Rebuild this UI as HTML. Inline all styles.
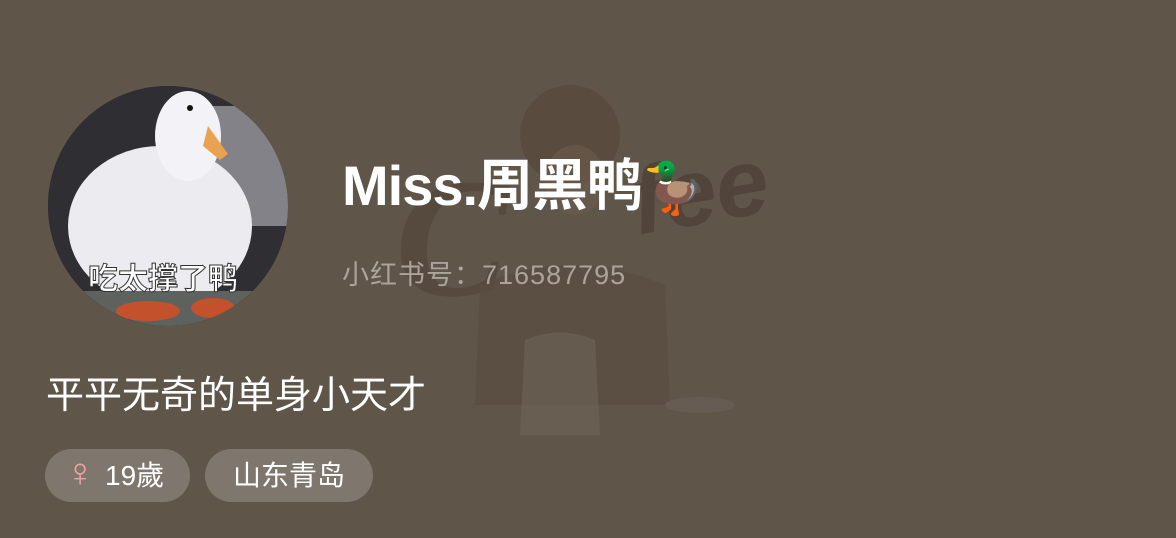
<!DOCTYPE html>
<html><head><meta charset="utf-8"><style>
html,body{margin:0;padding:0}
body{width:1176px;height:538px;background:#5f5549;position:relative;overflow:hidden;font-family:"Liberation Sans","Noto Sans CJK SC",sans-serif;color:#fff}
.wm{position:absolute;left:390px;top:85px;width:400px;height:370px}
.av{position:absolute;left:48px;top:86px;width:240px;height:240px;border-radius:50%;overflow:hidden;background:#2e2d30}
.name{position:absolute;left:342px;top:146px;font-size:56px;font-weight:bold;letter-spacing:-1px;line-height:80px}
.id{position:absolute;left:342px;top:255px;font-size:27px;letter-spacing:1px;color:#aca49a;line-height:40px}
.bio{position:absolute;left:46px;top:370px;font-size:38px;line-height:52px}
.tag{position:absolute;top:449px;height:53px;border-radius:27px;background:#7f766d;font-size:28px;line-height:53px;color:#fff}
</style></head><body>
<svg class="wm" viewBox="0 0 400 370">
<text x="5" y="210" font-family="Liberation Serif,serif" font-style="italic" font-weight="bold" font-size="170" fill="#54483d" opacity=".8">C</text>
<text x="240" y="140" font-family="Liberation Sans,sans-serif" font-style="italic" font-weight="bold" font-size="95" fill="#4e4037" opacity=".8" transform="rotate(-10 300 100)">fee</text>
<ellipse cx="180" cy="50" rx="50" ry="50" fill="#57483c" opacity=".7"/>
<ellipse cx="185" cy="95" rx="30" ry="35" fill="#6f5e50" opacity=".5"/>
<path d="M90 200 Q180 160 275 200 L280 320 L85 320 Z" fill="#5a4d41" opacity=".7"/>
<path d="M135 255 Q170 240 205 255 L210 350 L130 350 Z" fill="#6e6459" opacity=".6"/>
<ellipse cx="310" cy="320" rx="35" ry="8" fill="#665c51"/>
</svg>
<div class="av">
<svg width="240" height="240" viewBox="0 0 240 240">
<rect width="240" height="240" fill="#2f2e33"/>
<rect x="160" y="20" width="80" height="120" fill="#bdbbc1" opacity=".6"/>
<ellipse cx="112" cy="140" rx="92" ry="80" fill="#ecebf0"/>
<ellipse cx="140" cy="50" rx="33" ry="45" fill="#f3f2f6"/>
<path d="M160 40 L180 68 L172 74 L155 60 Z" fill="#e8a250"/>
<circle cx="142" cy="22" r="3" fill="#111"/>
<rect x="30" y="205" width="180" height="35" fill="#5d625f"/>
<ellipse cx="100" cy="225" rx="32" ry="10" fill="#c3512b"/>
<ellipse cx="165" cy="222" rx="22" ry="10" fill="#c3512b"/>
<text x="115" y="203" text-anchor="middle" font-family="Liberation Sans,Noto Sans CJK SC,sans-serif" font-size="30" font-weight="bold" fill="#fff" stroke="#333" stroke-width="1">吃太撑了鸭</text>
</svg>
</div>
<div class="name">Miss.周黑鸭<span style="font-size:50px">🦆</span></div>
<div class="id">小红书号：716587795</div>
<div class="bio">平平无奇的单身小天才</div>
<div class="tag" style="left:45px;width:145px"><span style="position:absolute;left:20px;top:-2px;color:#f0a0a8;font-size:40px">♀</span><span style="position:absolute;left:60px">19歲</span></div>
<div class="tag" style="left:205px;width:168px;text-align:center">山东青岛</div>
</body></html>
